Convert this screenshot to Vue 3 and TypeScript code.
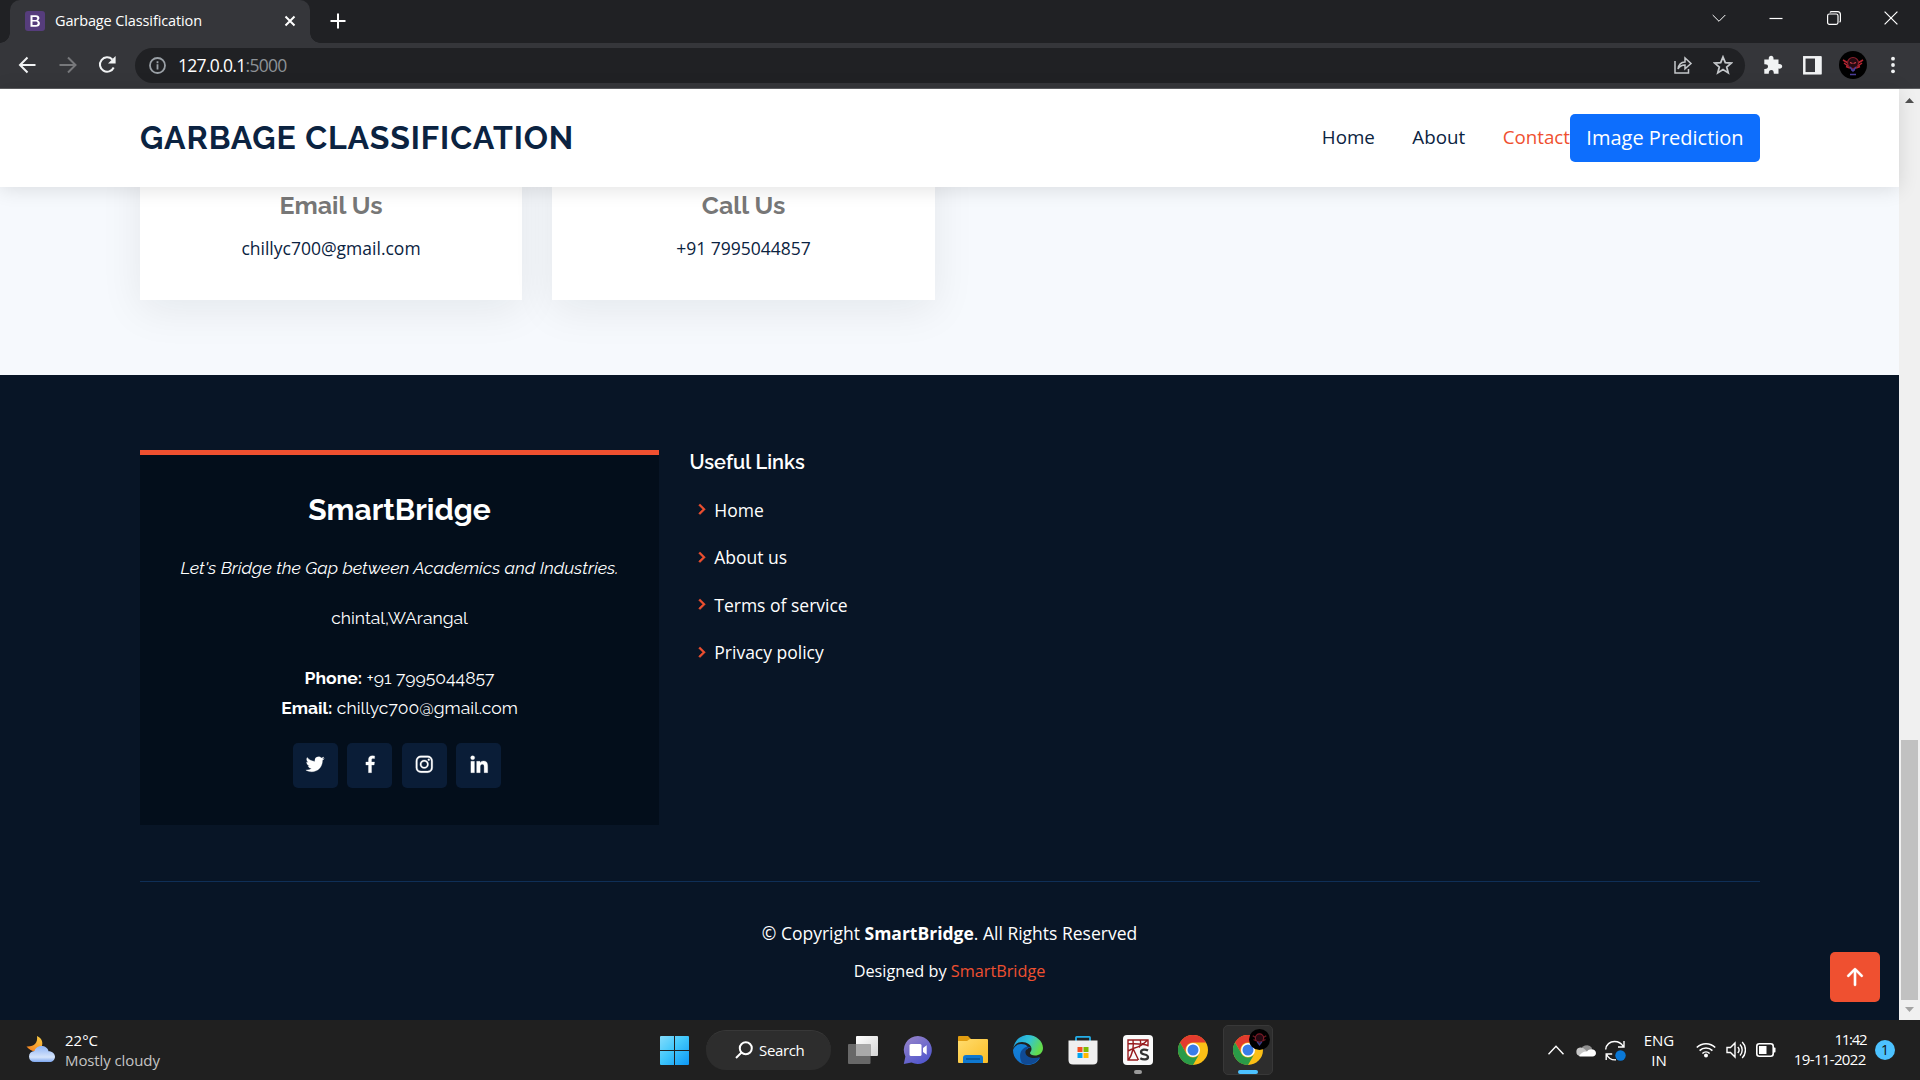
<script setup lang="ts">
interface SocialLink {
  name: string
  paths: string[]
}

const navLinks = [
  { label: 'Home', active: false },
  { label: 'About', active: false },
  { label: 'Contact', active: true },
]

const usefulLinks = ['Home', 'About us', 'Terms of service', 'Privacy policy']

const socials: SocialLink[] = [
  {
    name: 'Twitter',
    paths: [
      'M19.633 7.997c.013.175.013.349.013.523 0 5.325-4.053 11.461-11.46 11.461-2.282 0-4.402-.661-6.186-1.809.324.037.636.05.973.05a8.07 8.07 0 0 0 5.001-1.721 4.036 4.036 0 0 1-3.767-2.793c.249.037.499.062.761.062.361 0 .724-.05 1.061-.137a4.027 4.027 0 0 1-3.23-3.953v-.05c.537.299 1.16.486 1.82.511a4.022 4.022 0 0 1-1.796-3.354c0-.748.199-1.434.548-2.032a11.457 11.457 0 0 0 8.306 4.215c-.062-.3-.1-.611-.1-.923a4.026 4.026 0 0 1 4.028-4.028c1.16 0 2.207.486 2.943 1.272a7.957 7.957 0 0 0 2.556-.973 4.02 4.02 0 0 1-1.771 2.22 8.073 8.073 0 0 0 2.319-.624 8.645 8.645 0 0 1-2.019 2.083z',
    ],
  },
  {
    name: 'Facebook',
    paths: [
      'M13.397 20.997v-8.196h2.765l.411-3.209h-3.176V7.548c0-.926.258-1.56 1.587-1.56h1.684V3.127A22.336 22.336 0 0 0 14.201 3c-2.444 0-4.122 1.492-4.122 4.231v2.355H7.332v3.209h2.753v8.202h3.312z',
    ],
  },
  {
    name: 'Instagram',
    paths: [
      'M8.4 3h7.2A5.4 5.4 0 0 1 21 8.400v7.200A5.400 5.400 0 0 1 15.600 21H8.400A5.400 5.400 0 0 1 3 15.600V8.400A5.400 5.400 0 0 1 8.400 3zM8.500 4.700A3.800 3.800 0 0 0 4.700 8.500v7A3.800 3.800 0 0 0 8.500 19.300h7a3.800 3.800 0 0 0 3.800-3.800v-7A3.800 3.800 0 0 0 15.500 4.700z',
      'M12 7.380a4.620 4.620 0 1 0 0 9.240 4.620 4.620 0 0 0 0-9.240zm0 7.620a3 3 0 1 1 0-6 3 3 0 0 1 0 6z',
      'M16.800 6.120a1.080 1.080 0 1 0 0 2.160 1.080 1.080 0 0 0 0-2.160z',
    ],
  },
  {
    name: 'LinkedIn',
    paths: [
      'M4.983 2.821a2.188 2.188 0 1 0 0 4.376 2.188 2.188 0 0 0 0-4.376z',
      'M9.237 8.855v12.139h3.769v-6.003c0-1.584.298-3.118 2.262-3.118 1.937 0 1.961 1.811 1.961 3.218v5.904H21v-6.657c0-3.270-.704-5.783-4.526-5.783-1.835 0-3.065 1.007-3.568 1.960h-.051v-1.660H9.237zm-6.142 0H6.870v12.139H3.095z',
    ],
  },
]
</script>

<template>
  <div class="screen">
    <!-- Browser window frame -->
    <div class="tabstrip">
      <div class="tab">
        <svg class="favicon" width="20" height="20" viewBox="0 0 20 20">
          <rect width="20" height="20" rx="3" fill="#563d7c" />
          <path fill="#fff" fill-rule="evenodd" d="M5.500 4.200h5.400c2.200 0 3.500 1.100 3.500 2.900 0 1.200-.800 2.200-1.900 2.500 1.400.200 2.400 1.300 2.400 2.800 0 2.100-1.500 3.300-4 3.300H5.500zM7.500 5.900V9h2.400c1.500 0 2.300-.600 2.300-1.600S11.600 5.900 10.400 5.900zm0 4.600V14h2.900c1.500 0 2.300-.600 2.300-1.800 0-1.100-.800-1.700-2.500-1.700z" />
        </svg>
        <span class="tab-title">Garbage Classification</span>
        <svg class="tab-close" width="12" height="12" viewBox="0 0 12 12"><path d="M1.500 1.500l9 9M10.500 1.500l-9 9" stroke="#fff" stroke-width="2" /></svg>
      </div>
      <svg class="new-tab" width="16" height="16" viewBox="0 0 16 16"><path d="M8 .500v15M.500 8h15" stroke="#fff" stroke-width="2" /></svg>
      <div class="win-controls">
        <svg width="14" height="14" viewBox="0 0 14 14"><path d="M.700 4l6.300 6.300L13.300 4" /></svg>
        <svg width="14" height="14" viewBox="0 0 14 14"><path d="M.500 7.500h13" /></svg>
        <svg width="14" height="14" viewBox="0 0 14 14"><rect x=".600" y="3" width="10.400" height="10.400" rx="1.800" /><path d="M3 1.500Q3.400.700 4.500.600h6q2.900 0 2.900 2.900v6.200q0 1-.800 1.500" /></svg>
        <svg width="14" height="14" viewBox="0 0 14 14"><path d="M.600.600l12.800 12.800M13.400.600L.600 13.400" /></svg>
      </div>
    </div>

    <div class="toolbar">
      <svg class="tb-icon back" width="20" height="20" viewBox="0 0 20 20"><path d="M18.500 10H3.500M10.500 2.500L3 10l7.500 7.500" /></svg>
      <svg class="tb-icon fwd" width="20" height="20" viewBox="0 0 20 20"><path d="M.500 10H16M9 2.500l7.500 7.500L9 17.500" /></svg>
      <svg class="tb-icon" width="20" height="20" viewBox="0 0 20 20"><path d="M15.300 4.500A7.200 7.200 0 1 0 16.700 12.500" /><path d="M18.600 1v7.500H11z" fill="#f1f3f4" stroke="none" /></svg>
      <div class="omnibox">
        <svg class="info" width="17" height="17" viewBox="0 0 17 17"><circle cx="8.500" cy="8.500" r="7.500" /><path d="M8.500 7.300v5.200M8.500 4.200v2" /></svg>
        <span class="url">127.0.0.1<em>:5000</em></span>
        <svg class="share" width="20" height="20" viewBox="0 0 20 20"><path d="M2 6v12h13.500v-4M5 14c.600-4.500 3-6.900 7-7V3l6 5.500-6 5.300V10c-3.200 0-5.300 1-7 4z" /></svg>
        <svg class="star" width="20" height="20" viewBox="0 0 20 20"><path d="M10 2l2.300 5.700 6 .400-4.600 3.900 1.500 5.900L10 14.600l-5.200 3.300 1.500-5.900L1.700 8.100l6-.400z" /></svg>
      </div>
      <svg class="puzzle" width="20" height="20" viewBox="0 0 20 20"><path fill="#f1f3f4" d="M1.300 4.500h4.500C5.500 1.900 6.500.800 8.100.800s2.700 1.100 2.400 3.700h5V9c2.500-.300 3.700.800 3.700 2.300s-1.200 2.600-3.700 2.300v5.200h-4.700c.100-2.700-.800-3.900-2.500-3.900s-2.700 1.200-2.500 3.900H1.300V14c2.600.200 3.700-.800 3.700-2.500S3.900 9 1.300 9.200z" /></svg>
      <svg class="panel" width="19" height="19" viewBox="0 0 19 19"><rect x="1.300" y="1.300" width="16" height="16" fill="none" stroke="#f1f3f4" stroke-width="2.500" /><path d="M12 1h6.500v17H12z" fill="#f1f3f4" /></svg>
      <svg class="avatar" width="28" height="28" viewBox="0 0 28 28">
        <circle cx="14" cy="14" r="14" fill="#000" />
        <path d="M4 9l5 3M24 9l-5 3M5 12l4 3M23 12l-4 3M7 15.500l4 1.500M21 15.500l-4 1.500" stroke="#b92632" stroke-width="1.500" />
        <circle cx="14" cy="12" r="5.500" fill="#260a12" stroke="#8d202c" stroke-width="1.200" />
        <path d="M11 11.500l2.500 1M17 11.500l-2.500 1" stroke="#d8404a" stroke-width="1.300" />
        <path d="M11 16l3 4 3-4M12 19h4M11 23.500h6" stroke="#4b3f9a" stroke-width="1.500" fill="none" />
      </svg>
      <svg class="dots" width="6" height="18" viewBox="0 0 6 18"><g fill="#f1f3f4"><circle cx="3" cy="2.700" r="1.900" /><circle cx="3" cy="9" r="1.900" /><circle cx="3" cy="15.300" r="1.900" /></g></svg>
    </div>

    <!-- Web page -->
    <div class="viewport">
      <div class="page">
        <header class="site-header">
          <h1 class="logo">GARBAGE CLASSIFICATION</h1>
          <nav class="nav">
            <a v-for="l in navLinks" :key="l.label" :class="{ active: l.active }">{{ l.label }}</a>
            <button class="predict">Image Prediction</button>
          </nav>
        </header>

        <section class="contact">
          <div class="info-box">
            <h3>Email Us</h3>
            <p>chillyc700@gmail.com</p>
          </div>
          <div class="info-box">
            <h3>Call Us</h3>
            <p>+91 7995044857</p>
          </div>
        </section>

        <footer class="footer">
          <div class="footer-top">
            <div class="footer-info">
              <h3>SmartBridge</h3>
              <p class="tagline">Let's Bridge the Gap between Academics and Industries.</p>
              <p class="address">chintal,WArangal</p>
              <p class="phone"><strong>Phone:</strong> +91 7995044857</p>
              <p><strong>Email:</strong> chillyc700@gmail.com</p>
              <div class="socials">
                <a v-for="s in socials" :key="s.name" :aria-label="s.name">
                  <svg width="22.500" height="22.500" viewBox="0 0 24 24"><path v-for="(d, i) in s.paths" :key="i" :d="d" fill="#fff" stroke="#fff" stroke-width=".3" fill-rule="evenodd" /></svg>
                </a>
              </div>
            </div>
            <div class="footer-links">
              <h4>Useful Links</h4>
              <ul>
                <li v-for="label in usefulLinks" :key="label">
                  <svg width="22.500" height="22.500" viewBox="0 0 24 24"><path fill="#ef5030" stroke="#ef5030" stroke-width=".5" d="M10.707 17.707 16.414 12l-5.707-5.707-1.414 1.414L13.586 12l-4.293 4.293z" /></svg>
                  <a>{{ label }}</a>
                </li>
              </ul>
            </div>
          </div>
          <div class="footer-bottom">
            <p class="copyright">© Copyright <strong>SmartBridge</strong>. All Rights Reserved</p>
            <p class="credits">Designed by <a>SmartBridge</a></p>
          </div>
        </footer>

        <a class="to-top">
          <svg width="36" height="36" viewBox="0 0 16 16"><path fill="#fff" stroke="#fff" stroke-width=".15" d="M8 12a.5.5 0 0 0 .5-.5V5.707l2.146 2.147a.5.5 0 0 0 .708-.708l-3-3a.5.5 0 0 0-.708 0l-3 3a.5.5 0 1 0 .708.708L7.500 5.707V11.500a.5.5 0 0 0 .5.5z" /></svg>
        </a>
      </div>
      <div class="scrollbar">
        <svg width="9" height="5" viewBox="0 0 9 5"><path d="M0 5L4.500 0 9 5z" fill="#505050" /></svg>
        <div class="thumb"></div>
        <svg width="9" height="5" viewBox="0 0 9 5"><path d="M0 0h9L4.500 5z" fill="#a3a3a3" /></svg>
      </div>
    </div>

    <!-- Taskbar -->
    <div class="taskbar">
      <div class="weather">
        <svg width="31" height="28" viewBox="0 0 31 28">
          <defs>
            <linearGradient id="moon" x1="0" y1="1" x2=".6" y2="0"><stop offset="0" stop-color="#f47a1c" /><stop offset="1" stop-color="#f9c440" /></linearGradient>
            <linearGradient id="cloud" x1="0" y1="0" x2="0" y2="1"><stop offset="0" stop-color="#8fb4f5" /><stop offset=".7" stop-color="#d5e4fb" /><stop offset="1" stop-color="#7ba5ee" /></linearGradient>
          </defs>
          <path d="M12 1c5 2 6.500 7 4.500 11-2.500 5.500-10 6-15-.500C9 12 13 8 12 1z" fill="url(#moon)" />
          <path d="M9.500 27a5.500 5.500 0 0 1 0-11c1-3.500 4-5 7-5 3.500 0 6.500 2 7 5.200 4 0 6.500 2.500 6.500 5.500S27.500 27 24.500 27z" fill="url(#cloud)" />
        </svg>
        <div class="weather-text"><span class="temp">22°C</span><span class="cond">Mostly cloudy</span></div>
      </div>

      <div class="apps">
        <div class="app start">
          <svg width="29" height="29" viewBox="0 0 29 29">
            <defs><linearGradient id="win" x1="0" y1="0" x2="1" y2="1"><stop offset="0" stop-color="#84dcfb" /><stop offset=".45" stop-color="#42c8fb" /><stop offset="1" stop-color="#0c97f5" /></linearGradient></defs>
            <path fill="url(#win)" d="M1 0h13v14H0V1q0-1 1-1zM15 0h13q1 0 1 1v13H15zM0 15h14v14H1q-1 0-1-1zM15 15h14v13q0 1-1 1H15z" />
          </svg>
        </div>
        <div class="search">
          <svg width="18" height="18" viewBox="0 0 18 18"><circle cx="10.800" cy="7.200" r="6" fill="none" stroke="#fff" stroke-width="2" /><path d="M6.500 11.500L1 17" stroke="#fff" stroke-width="2" /></svg>
          <span>Search</span>
        </div>
        <div class="app">
          <svg width="30" height="28" viewBox="0 0 30 28">
            <defs><linearGradient id="tv" x1="0" y1="0" x2="1" y2="1"><stop offset="0" stop-color="#fff" /><stop offset="1" stop-color="#d5d5d5" /></linearGradient></defs>
            <rect x="8" y="0" width="22" height="20" rx="1" fill="url(#tv)" /><rect x="0" y="8" width="22.500" height="20" rx="1" fill="#686868" /><path d="M8 8h14.500v12H8z" fill="#a9a9a9" />
          </svg>
        </div>
        <div class="app">
          <svg width="30" height="30" viewBox="0 0 30 30">
            <defs><linearGradient id="chat" x1="0" y1="0" x2=".6" y2="1"><stop offset="0" stop-color="#9a86c9" /><stop offset="1" stop-color="#5358cd" /></linearGradient></defs>
            <path d="M15 1a14 14 0 1 1-6.500 26.500L.800 29l1.600-7.500A14 14 0 0 1 15 1z" fill="url(#chat)" />
            <rect x="6.500" y="9" width="12" height="12" rx="1.500" fill="#fff" /><path d="M20 13l3.700-2.800v9.600L20 17z" fill="#fff" />
          </svg>
        </div>
        <div class="app">
          <svg width="30" height="28" viewBox="0 0 30 28">
            <defs><linearGradient id="fold" x1="0" y1="0" x2="1" y2="1"><stop offset="0" stop-color="#ffdc6e" /><stop offset="1" stop-color="#fbbd25" /></linearGradient></defs>
            <path d="M0 1q0-1 1-1h9l3 3h16v9H0z" fill="#e09c10" /><path d="M0 5h9l3-2h17q1 0 1 1v22q0 1-1 1H1q-1 0-1-1z" fill="url(#fold)" /><path d="M5 27v-5q0-3 3-3h14q3 0 3 3v5z" fill="#0f78d0" /><path d="M8 23h14" stroke="#084e8c" stroke-width="1.400" />
          </svg>
        </div>
        <div class="app">
          <svg width="30" height="30" viewBox="0 0 30 30">
            <defs>
              <linearGradient id="e1" x1="0" y1="0" x2="1" y2=".4"><stop offset="0" stop-color="#1a9be2" /><stop offset=".55" stop-color="#33c4d4" /><stop offset="1" stop-color="#63dc4c" /></linearGradient>
              <linearGradient id="e2" x1="0" y1="0" x2="0" y2="1"><stop offset="0" stop-color="#1283d8" /><stop offset="1" stop-color="#1373cf" /></linearGradient>
            </defs>
            <path d="M0 15c1-2 3-6 8-6 6 0 7 3 7 5-3 0-4 3-3 6 2 4 8 6 15 3-3 5-8 7-12 7A15 15 0 0 1 0 15z" fill="url(#e2)" />
            <path d="M9 28c-3-5-3-13 4-16 2-.500 4 0 5 1-4-.500-6 2-5.500 5 1 4.500 8 6.500 14.500 4-3 6-11 10-18 6z" fill="#104a94" />
            <path d="M.300 13C1.500 5 8 0 15 0c8 0 15 6 15 13 0 5-4 7.500-8 7.500-3 0-5-1-5-2.500 0-1 1.500-1.500 1.500-4C18.500 10 14 7 9 7S1.500 10 .300 13z" fill="url(#e1)" />
          </svg>
        </div>
        <div class="app store">
          <svg width="30" height="30" viewBox="0 0 30 30">
            <path d="M8 6V2.500Q8 1.800 8.700 1.800h12.600q.700 0 .700.700V6" fill="none" stroke="#24aee8" stroke-width="1.800" />
            <path d="M.500 5.500h29V25q0 4.500-4.500 4.500H5Q.500 29.500.500 25z" fill="#efefef" />
            <path fill="#f25022" d="M9.500 12h5v5h-5z" /><path fill="#7fba00" d="M15.500 12h5v5h-5z" /><path fill="#00a4ef" d="M9.500 18h5v5h-5z" /><path fill="#ffb900" d="M15.500 18h5v5h-5z" />
          </svg>
        </div>
        <div class="app running">
          <svg width="30" height="30" viewBox="0 0 30 30">
            <rect width="30" height="30" rx="4" fill="#fafafa" />
            <g fill="none" stroke="#981b1e" stroke-width="1.400"><path d="M15 25H5V5h20v6.500M5 8.500c7 .500 13-.500 20 2M10 5c1 7-.500 14-4.500 20M5 16l5-2.500L15.500 25M10 13.500c6-1.500 11-4.500 14.500-8.500M17 5c1 2 1 4.500-1 7.500" /></g>
            <path d="M25 15.500c-2.500-1.500-7-1.300-7 1.500 0 3.500 7 1.500 7 5 0 3-5 3-7.700 1.300" fill="none" stroke="#333" stroke-width="2.300" />
          </svg>
        </div>
        <div class="app">
          <svg width="30" height="30" viewBox="0 0 30 30"><circle cx="15" cy="15" r="15" fill="#fbbf16" /><path d="M2 7.500A15 15 0 0 1 28 7.500H15a7.500 7.500 0 0 0-6.500 11.300z" fill="#e33b2e" /><path d="M2 7.500l6.500 11.300A7.500 7.500 0 0 0 21.500 18.800L15 30A15 15 0 0 1 2 7.500z" fill="#2a9b48" /><circle cx="15" cy="15" r="7" fill="#fff" /><circle cx="15" cy="15" r="5.500" fill="#3a7de8" /></svg>
        </div>
        <div class="app current">
          <svg width="30" height="30" viewBox="0 0 30 30"><circle cx="15" cy="15" r="15" fill="#fbbf16" /><path d="M2 7.500A15 15 0 0 1 28 7.500H15a7.500 7.500 0 0 0-6.500 11.300z" fill="#e33b2e" /><path d="M2 7.500l6.500 11.300A7.500 7.500 0 0 0 21.500 18.800L15 30A15 15 0 0 1 2 7.500z" fill="#2a9b48" /><circle cx="15" cy="15" r="7" fill="#fff" /><circle cx="15" cy="15" r="5.500" fill="#3a7de8" /></svg>
          <svg class="profile" width="21" height="21" viewBox="0 0 28 28"><circle cx="14" cy="14" r="14" fill="#000" /><path d="M5 9l5 3M23 9l-5 3M6 14l4 2M22 14l-4 2" stroke="#6d1822" stroke-width="1.800" /><circle cx="14" cy="12" r="5.500" fill="#240a12" stroke="#7d1c28" stroke-width="1.500" /><path d="M11 17l3 4 3-4" stroke="#3a3c80" stroke-width="1.800" fill="none" /></svg>
        </div>
      </div>

      <div class="tray">
        <svg class="t-chev" width="16" height="10" viewBox="0 0 16 10"><path d="M.500 9.300L8 1.200l7.500 8.100" /></svg>
        <svg class="t-cloud" width="20" height="14" viewBox="0 0 20 14"><path d="M5 9a6 6 0 0 1 11-4l-2 6z" fill="#8e8e8e" /><path d="M4 13a4.300 4.300 0 0 1 0-8.500c4-.500 6 3 9 6z" fill="#c6c6c6" /><path d="M3 13c2-3 5-5 8-4.500 2-3.500 9-3 9 1.500 0 2-1.500 3.500-3.500 3.500H4z" fill="#fff" /></svg>
        <svg class="t-sync" width="21" height="21" viewBox="0 0 21 21"><path d="M.700 9.500C1 4.500 5 1.500 9.500 1.500c4 0 7 2 8.800 5M19 1v6h-6M11 19.800c-4.500.300-8-2.300-9.500-5.600M1.200 20v-6h6" /><circle cx="15.500" cy="15.500" r="5.200" fill="#0a78d6" stroke="none" /></svg>
        <div class="lang"><span>ENG</span><span>IN</span></div>
        <svg class="t-wifi" width="20" height="16" viewBox="0 0 20 16"><path d="M.800 5.500a13 13 0 0 1 18.400 0M3.600 8.600a9 9 0 0 1 12.800 0M6.400 11.500a5.200 5.200 0 0 1 7.200 0" stroke-width="1.600" /><circle cx="10" cy="13.600" r="2" fill="#fff" stroke="none" /></svg>
        <svg class="t-vol" width="20" height="18" viewBox="0 0 20 18"><path d="M1 6.500h3.500L9 2v14l-4.500-4.500H1zM11.800 6a4.500 4.500 0 0 1 0 6M14 3.500a8 8 0 0 1 0 11M16.200 1a11.500 11.500 0 0 1 0 16" /></svg>
        <svg class="t-bat" width="20" height="14" viewBox="0 0 20 14"><rect x=".800" y=".800" width="16.400" height="12.400" rx="2.500" stroke-width="1.600" /><path d="M3 3h7.500v8H3z" fill="#fff" stroke="none" /><path d="M17.500 4.500h1.300q.700 0 .700 1v3q0 1-.700 1h-1.300z" fill="#fff" stroke="none" /></svg>
        <div class="clock"><span class="time">11:42</span><span class="date">19-11-2022</span></div>
        <div class="badge">1</div>
      </div>
    </div>
  </div>
</template>

<style>
body {
  margin: 0;
  overflow: hidden;
}
</style>

<style scoped>
.screen {
  width: 1920px;
  height: 1080px;
  display: flex;
  flex-direction: column;
  overflow: hidden;
  font-family: 'Open Sans', 'Noto Sans', sans-serif;
}
.screen * {
  box-sizing: border-box;
}
h1, h3, h4, p, ul {
  margin: 0;
  padding: 0;
  list-style: none;
  white-space: nowrap;
}
svg {
  display: block;
  flex: none;
}

/* Browser frame */
.tabstrip {
  height: 43px;
  flex: none;
  background: #202124;
  display: flex;
  align-items: center;
  padding-left: 10px;
}
.tab {
  position: relative;
  width: 300px;
  height: 43px;
  background: #35363a;
  border-radius: 10px 10px 0 0;
  display: flex;
  align-items: center;
  padding: 0 14px 1px 15px;
}
.tab::before,
.tab::after {
  content: '';
  position: absolute;
  bottom: 0;
  width: 10px;
  height: 10px;
}
.tab::before {
  left: -10px;
  background: radial-gradient(circle at 0 0, transparent 9.5px, #35363a 10px);
}
.tab::after {
  right: -10px;
  background: radial-gradient(circle at 100% 0, transparent 9.5px, #35363a 10px);
}
.tab-title {
  margin-left: 10px;
  font-size: 14.500px;
  line-height: 20px;
  letter-spacing: -0.12px;
  color: #fff;
  white-space: nowrap;
}
.tab-close {
  margin-left: auto;
}
.new-tab {
  margin: 0 0 1px 19.500px;
}
.win-controls {
  margin-left: auto;
  padding: 0 22px 7px 0;
  display: flex;
  gap: 43.300px;
}
.win-controls svg {
  fill: none;
  stroke: #fff;
  stroke-width: 1.200;
}
.win-controls svg:first-child {
  stroke-width: 1;
}
.toolbar {
  height: 46px;
  flex: none;
  background: #35363a;
  border-bottom: 1px solid #5d5e61;
  display: flex;
  align-items: center;
  padding: 0 23px 1px 17px;
}
.tb-icon {
  fill: none;
  stroke: #f1f3f4;
  stroke-width: 2;
  margin-right: 21px;
}
.tb-icon.back {
  margin-right: 22px;
}
.tb-icon.fwd {
  stroke: #77787b;
  margin-right: 18px;
}
.omnibox {
  width: 1610px;
  height: 35px;
  flex: none;
  margin: 1px 0 0 -3px;
  border-radius: 18px;
  background: #202124;
  display: flex;
  align-items: center;
  padding: 0 12px 1px 14px;
}
.info {
  fill: none;
  stroke: #9aa0a6;
  stroke-width: 1.800;
}
.url {
  margin-left: 12px;
  font-size: 17.500px;
  line-height: 24px;
  letter-spacing: -0.7px;
  color: #fff;
}
.url em {
  font-style: normal;
  color: #8d9297;
}
.share,
.star {
  fill: none;
  stroke: #c4c7ca;
  stroke-width: 1.500;
}
.share {
  margin-left: auto;
}
.star {
  margin-left: 20px;
  stroke-width: 1.800;
}
.puzzle {
  margin-left: 18px;
}
.panel {
  margin-left: 20px;
}
.avatar {
  margin-left: 17px;
}
.dots {
  margin-left: 22.500px;
}

/* Page */
.viewport {
  height: 931px;
  flex: none;
  display: flex;
}
.page {
  position: relative;
  width: 1899px;
  background: #f6f9fd;
  display: flex;
  flex-direction: column;
}
.site-header {
  position: relative;
  z-index: 2;
  height: 98px;
  flex: none;
  padding: 0 139px 0 140px;
  background: #fff;
  box-shadow: 0 2px 19px rgba(0, 0, 0, 0.12);
  display: flex;
  align-items: center;
  justify-content: space-between;
}
.logo {
  font: 700 32px/40px Raleway, Lato, sans-serif;
  letter-spacing: 0.9px;
  color: #0b2341;
}
.nav {
  display: flex;
  align-items: center;
}
.nav a {
  font-size: 18.750px;
  line-height: 26px;
  margin: 0 37.500px 2px 0;
  color: #0b2341;
}
.nav a.active {
  margin-right: 0;
  color: #ef5030;
}
.predict {
  width: 190px;
  height: 48px;
  padding: 0;
  border: 0;
  border-radius: 5px;
  background: #0d6efd;
  color: #fff;
  font: 400 20px/30px 'Open Sans', sans-serif;
}
.contact {
  height: 188px;
  flex: none;
  padding-left: 140px;
  display: flex;
  gap: 30px;
}
.info-box {
  width: 382px;
  height: 153px;
  margin-top: -40px;
  padding-top: 40px;
  background: #fff;
  box-shadow: 0 10px 40px rgba(20, 24, 32, 0.075);
  text-align: center;
}
.info-box + .info-box {
  width: 383px;
}
.info-box h3 {
  font: 700 25px/36px Raleway, Lato, sans-serif;
  color: #777;
}
.info-box p {
  margin-top: 10px;
  font-size: 17.500px;
  line-height: 30px;
  color: #0b2341;
}
.footer {
  flex: 1;
  background: #081526;
  color: #fff;
  padding: 75px 139px 0 140px;
}
.footer-top {
  display: flex;
  gap: 30.500px;
  height: 432px;
  border-bottom: 1px solid #0f2f57;
}
.footer-top > div {
  flex: none;
}
.footer-info {
  width: 519px;
  height: 375px;
  background: #030e1b;
  border-top: 5px solid #ef5030;
  padding-top: 35px;
  text-align: center;
  font-family: Raleway, Lato, sans-serif;
  font-size: 17.500px;
  line-height: 30px;
}
.footer-info h3 {
  font-size: 30px;
  line-height: 40px;
  font-weight: 700;
}
.tagline {
  margin-top: 23px;
  font-style: italic;
}
.address {
  margin-top: 20px;
}
.phone {
  margin-top: 30px;
}
.socials {
  display: flex;
  justify-content: center;
  gap: 9.500px;
  margin-top: 20px;
  padding-right: 5px;
}
.socials a {
  width: 45px;
  height: 45px;
  border-radius: 5px;
  background: #0a1d37;
  display: flex;
  justify-content: center;
  padding-top: 10px;
}
.footer-links h4 {
  font: 600 20px/24px Raleway, Lato, sans-serif;
}
.footer-links ul {
  margin-top: 23.700px;
}
.footer-links li {
  display: flex;
  align-items: center;
  height: 24px;
  margin-bottom: 23.500px;
  font-size: 17.500px;
}
.footer-links li svg {
  margin-right: 2.300px;
}
.footer-bottom {
  padding: 36px 1px 0 0;
  text-align: center;
}
.copyright {
  font-size: 17.500px;
  line-height: 30px;
}
.credits {
  margin-top: 9px;
  font-size: 16.250px;
  line-height: 28px;
}
.credits a {
  color: #ef5030;
}
.to-top {
  position: absolute;
  right: 19px;
  bottom: 18px;
  width: 50px;
  height: 50px;
  border-radius: 5px;
  background: #ef5030;
  display: flex;
  align-items: center;
  justify-content: center;
}
.scrollbar {
  width: 21px;
  background: #f0f0f0;
  display: flex;
  flex-direction: column;
  align-items: center;
  padding: 9px 0 8px;
}
.thumb {
  width: 17px;
  height: 260px;
  margin: auto 0 7px;
  background: #c1c1c1;
}

/* Taskbar */
.taskbar {
  height: 60px;
  flex: none;
  background: #202020;
  display: flex;
  align-items: center;
  color: #fff;
}
.weather {
  width: 650px;
  display: flex;
  align-items: center;
  padding-left: 25px;
  font-size: 15px;
  line-height: 20px;
}
.weather svg {
  margin-bottom: 2px;
}
.weather-text {
  margin-left: 9px;
  display: flex;
  flex-direction: column;
}
.cond {
  color: #c4c4c4;
  letter-spacing: -0.1px;
}
.apps {
  display: flex;
  align-items: center;
  gap: 5px;
}
.app {
  position: relative;
  width: 50px;
  height: 50px;
  display: flex;
  align-items: center;
  justify-content: center;
}
.app.start,
.app.store {
  padding-right: 1px;
}
.search {
  width: 125px;
  height: 40px;
  margin: 0 2px 0 1px;
  border-radius: 20px;
  background: #2d2d2d;
  border-top: 1px solid #383838;
  display: flex;
  align-items: center;
  padding: 0 0 1px 29px;
  font-size: 15px;
  line-height: 20px;
  letter-spacing: -0.35px;
}
.search span {
  margin-left: 6px;
}
.current {
  background: #2d2d2d;
  border: 1px solid #383838;
  border-radius: 5px;
}
.current::after,
.running::after {
  content: '';
  position: absolute;
  bottom: 1px;
  left: 21px;
  width: 8px;
  height: 4px;
  border-radius: 2px;
  background: #9a9a9a;
}
.current::after {
  left: 14px;
  bottom: 0;
  width: 20px;
  background: #4cc2ff;
}
.profile {
  position: absolute;
  left: 25px;
  top: 3px;
}
.tray {
  margin-left: auto;
  padding-right: 25px;
  display: flex;
  align-items: center;
}
.tray svg {
  fill: none;
  stroke: #fff;
  stroke-width: 1.400;
}
.tray .t-cloud {
  margin-left: 12px;
  stroke: none;
}
.t-sync {
  margin-left: 9px;
}
.lang {
  width: 40px;
  margin-left: 13px;
  display: flex;
  flex-direction: column;
  align-items: center;
  font-size: 15px;
  line-height: 20px;
}
.t-wifi {
  margin-left: 17px;
}
.t-vol,
.t-bat {
  margin-left: 10px;
}
.clock {
  width: 89px;
  padding-bottom: 2px;
  display: flex;
  flex-direction: column;
  align-items: flex-end;
  font-size: 15px;
  line-height: 20px;
}
.time {
  letter-spacing: -1.300px;
  margin-right: -1.300px;
}
.date {
  letter-spacing: -0.650px;
  margin-right: -0.650px;
}
.badge {
  width: 20px;
  height: 20px;
  margin-left: 10px;
  border-radius: 50%;
  background: #4cc2ff;
  color: #111;
  font-size: 14px;
  line-height: 20px;
  text-align: center;
}
</style>
